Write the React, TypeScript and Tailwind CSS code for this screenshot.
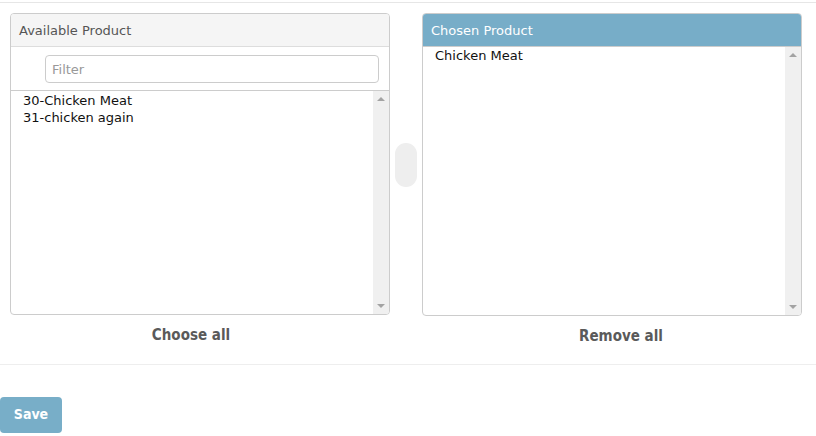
const available = ['30-Chicken Meat', '31-chicken again']
const chosen = ['Chicken Meat']

function Scrollbar() {
  return (
    <div className="w-[16px] shrink-0 bg-[#f0f0f0] flex flex-col items-center justify-between py-[6px]">
      <span className="w-0 h-0 border-l-[4px] border-r-[4px] border-b-[4px] border-l-transparent border-r-transparent border-b-[#a3a3a3]" />
      <span className="w-0 h-0 border-l-[4px] border-r-[4px] border-t-[4px] border-l-transparent border-r-transparent border-t-[#a3a3a3]" />
    </div>
  )
}

function ItemList({ items, className, top }: { items: string[]; className: string; top: string }) {
  return (
    <div className={`flex ${className}`}>
      <ul className={`flex-1 ${top} text-[13px] leading-[17px] text-[#111]`}>
        {items.map((it) => (
          <li key={it} className="px-[12px]">{it}</li>
        ))}
      </ul>
      <Scrollbar />
    </div>
  )
}

export default function App() {
  return (
    <div className="w-[816px] h-[436px] bg-white overflow-hidden font-['DejaVu_Sans',Verdana,sans-serif]">
      <div className="mt-[2px] border-t border-[#e6e6e6]" />
      <div className="flex items-start pt-[10px] pl-[10px]">
        {/* available */}
        <div className="w-[380px]">
          <div className="h-[302px] border border-[#cccccc] rounded-[4px] flex flex-col overflow-hidden">
            <div className="h-[33px] shrink-0 bg-[#f5f5f5] border-b border-[#dddddd] px-[8px] pt-[2px] flex items-center text-[13px] text-[#555]">
              Available Product
            </div>
            <div className="shrink-0 pt-[8px] pb-[7px] pl-[34px] pr-[10px] border-b border-[#cccccc]">
              <div className="h-[28px] border border-[#cccccc] rounded-[4px] px-[6px] pt-[1px] flex items-center text-[13px] text-[#999]">
                Filter
              </div>
            </div>
            <ItemList items={available} top="pt-[1px]" className="flex-1 min-h-0" />
          </div>
          <div className="mt-[9px] pr-[18px] text-center font-['DejaVu_Sans',sans-serif] font-stretch-condensed font-bold text-[15px] text-[#5a5a5a]">
            Choose all
          </div>
        </div>
        {/* middle handle */}
        <div className="w-[32px] shrink-0 flex justify-center pt-[130px]">
          <div className="w-[22px] h-[44px] rounded-[11px] bg-[#eeeeee]" />
        </div>
        {/* chosen */}
        <div className="w-[380px]">
          <div className="h-[303px] border border-[#cccccc] rounded-[4px] flex flex-col overflow-hidden">
            <div className="h-[33px] shrink-0 bg-[#77adc8] border-b border-[#cccccc] px-[8px] pt-[2px] flex items-center text-[13px] text-white">
              Chosen Product
            </div>
            <ItemList items={chosen} top="pt-0" className="flex-1 min-h-0" />
          </div>
          <div className="mt-[9px] pl-[18px] text-center font-['DejaVu_Sans',sans-serif] font-stretch-condensed font-bold text-[15px] text-[#5a5a5a]">
            Remove all
          </div>
        </div>
      </div>
      <div className="mt-[16px] border-t border-[#eeeeee]" />
      <div className="pt-[32px]">
        <button className="w-[62px] h-[36px] rounded-[4px] bg-[#78aec8] text-white font-['DejaVu_Sans',sans-serif] font-stretch-condensed font-bold text-[14px]">
          Save
        </button>
      </div>
    </div>
  )
}
